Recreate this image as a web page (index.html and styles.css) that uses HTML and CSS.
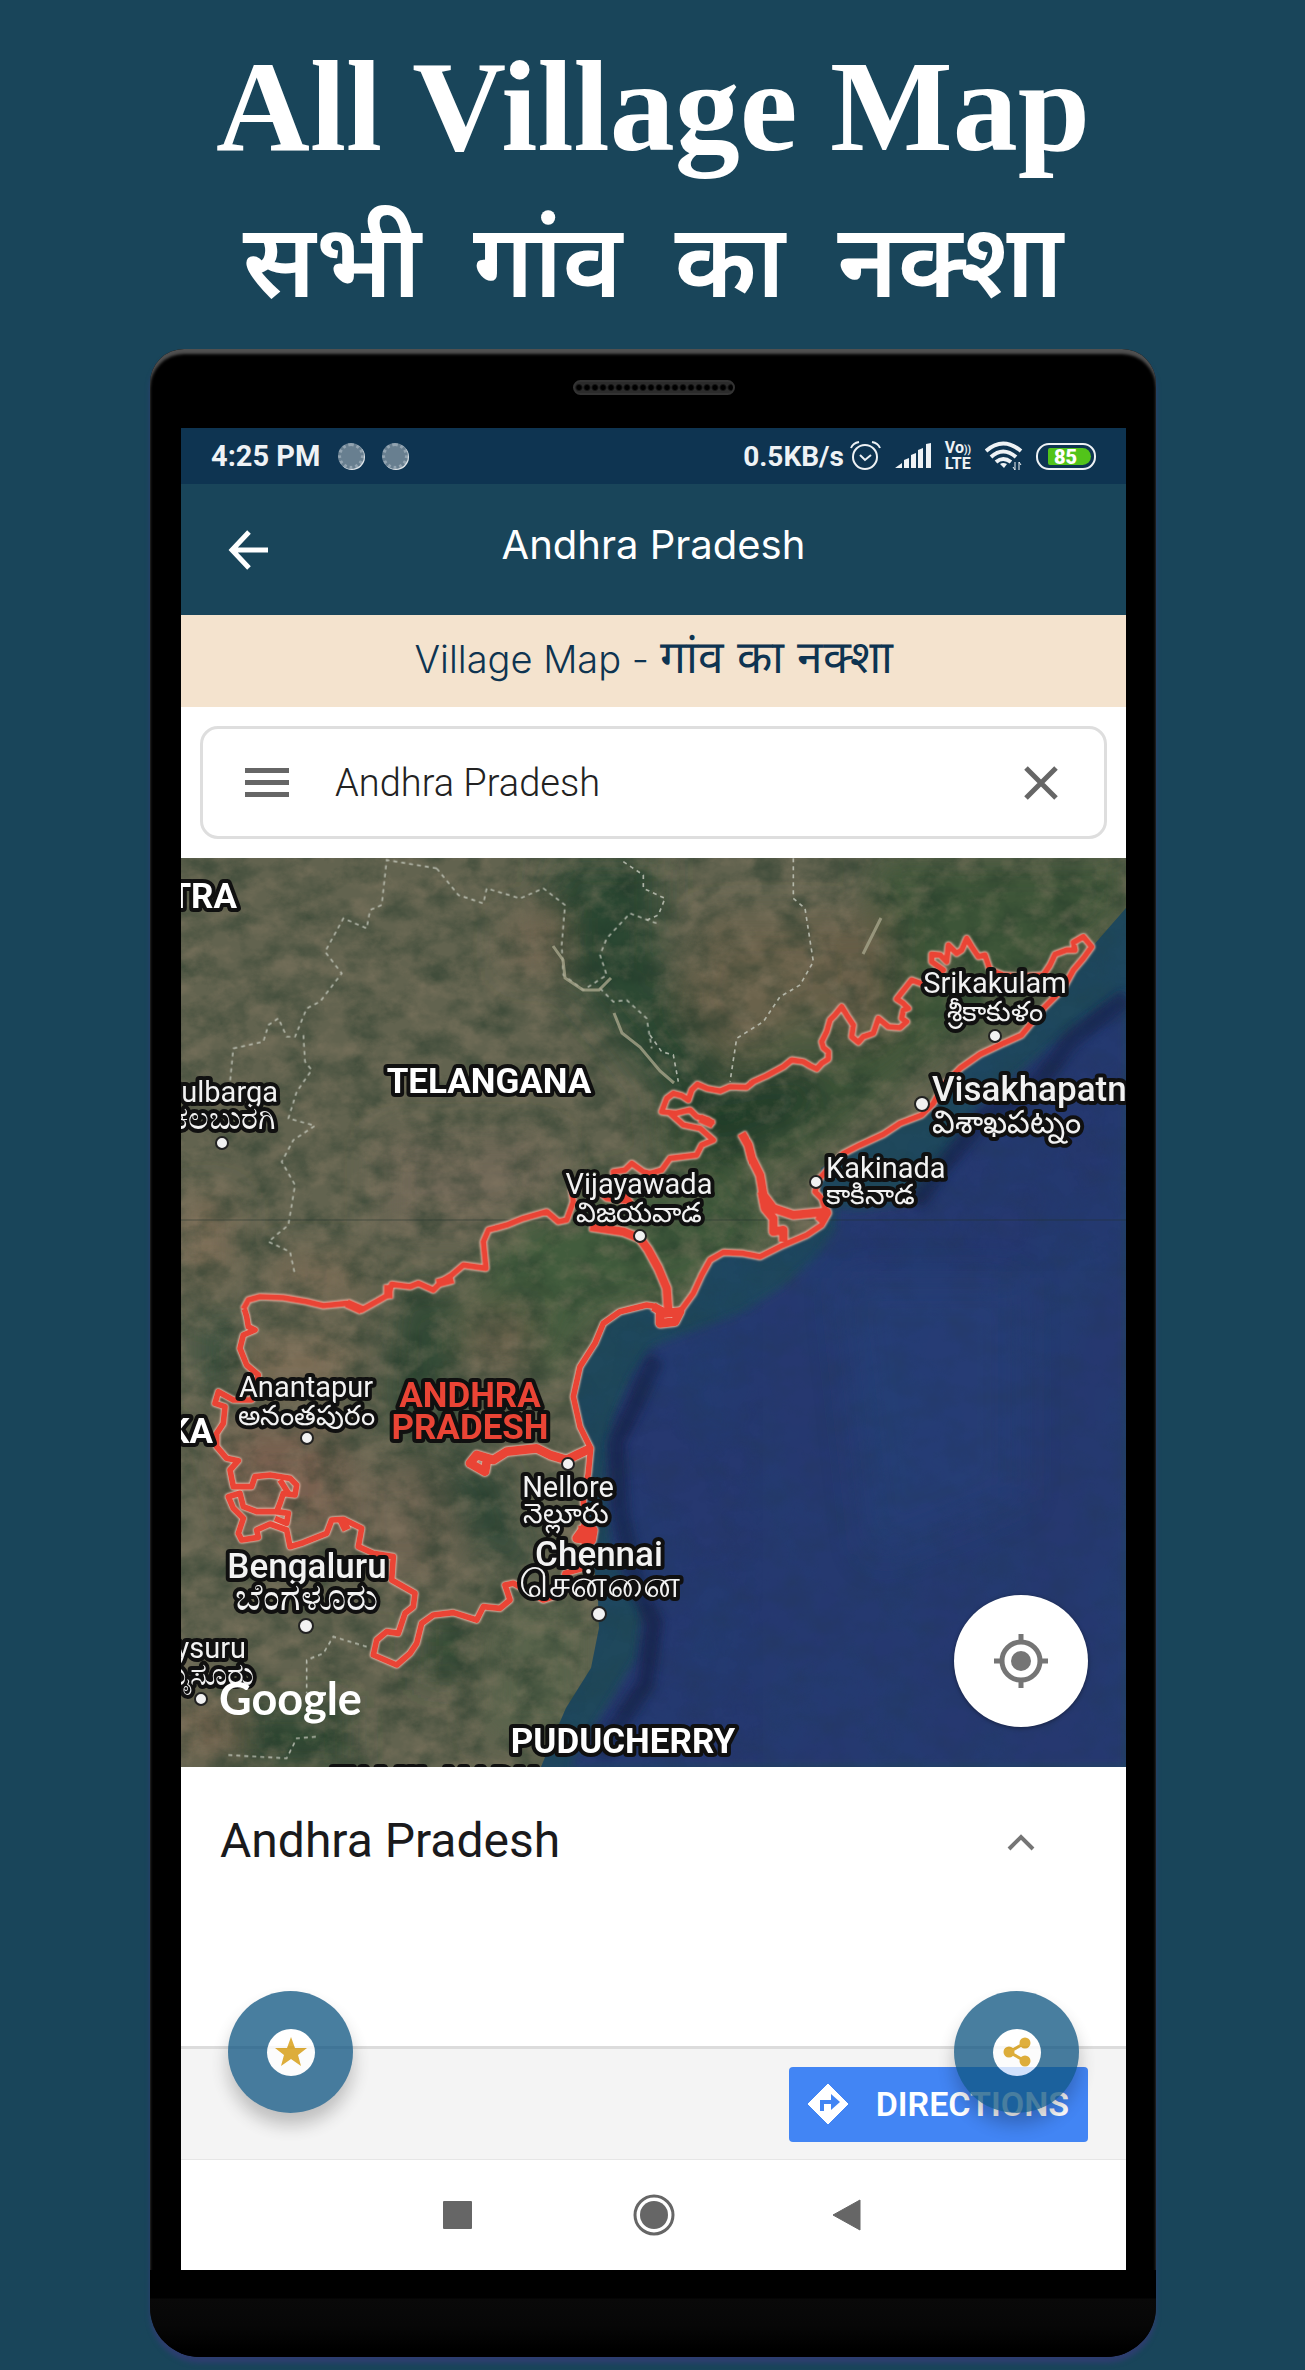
FILE: index.html
```html
<!DOCTYPE html>
<html lang="en">
  <head>
    <title>All Village Map</title>
    <meta charset="UTF-8"/>
    <meta name="viewport" content="width=device-width, initial-scale=1">
    <link rel="stylesheet" href="styles.css">
  </head>
  <body>
    <header class="promo">
      <h1>All Village Map</h1>
      <p class="promo-hindi" lang="hi"><span>सभी</span><span>गांव</span><span>का</span><span>नक्शा</span></p>
    </header>

    <div class="phone">
      <div class="speaker"></div>
      <div class="screen">

        <div class="status-bar">
          <span>4:25 PM</span>
          <span class="moon"></span>
          <span class="moon"></span>
          <span class="speed">0.5KB/s</span>
          <svg class="alarm" width="31" height="30" viewBox="0 0 31 30" fill="none" stroke="#eef2f5" stroke-width="2">
            <circle cx="15" cy="16" r="12"/><path d="M10 14l5 5 6-5M1 7q2-5 8-6M30 7q-2-5-8-6"/>
          </svg>
          <svg class="signal" width="36" height="26" viewBox="0 0 36 26" fill="#eef2f5">
            <path d="M0 25l7-5v5zM9 17l5-2v10H9zM16 12l5-2v15h-5zM23 7l5-2v20h-5zM31 1l5-1v25h-5z"/>
          </svg>
          <span class="volte"><span>Vo<small>))</small></span><span>LTE</span></span>
          <svg class="wifi" width="38" height="30" viewBox="0 0 38 30" fill="none" stroke="#eef2f5" stroke-width="4">
            <path d="M1 10q17-15 35 0M6 16q12-11 25 0M11 21q7-6 15 0"/><path d="M15 23q3-2 7 0l-3 4z" fill="#eef2f5" stroke="none"/>
            <path d="M30 21v8M34 21v8M28 26l2 3M34 21l2 3" stroke-width="1"/>
          </svg>
          <span class="battery"><b>85</b></span>
        </div>

        <div class="app-bar">
          <button class="icon-btn back" aria-label="Back">
            <svg width="40" height="40" viewBox="0 0 40 40" fill="none" stroke="#fff" stroke-width="5"><path d="M21 2L4 20l17 18M4 20h36"/></svg>
          </button>
          <h2>Andhra Pradesh</h2>
        </div>

        <div class="banner">Village Map - <span lang="hi">गांव का नक्शा</span></div>

        <form class="search">
          <button type="button" class="icon-btn menu" aria-label="Menu">
            <svg width="44" height="30" viewBox="0 0 44 30" fill="#666"><path d="M0 0h44v5H0zM0 12h44v5H0zM0 24h44v5H0z"/></svg>
          </button>
          <input type="text" aria-label="Search place" value="Andhra Pradesh">
          <button type="reset" class="icon-btn" aria-label="Clear">
            <svg width="34" height="34" viewBox="0 0 34 34" fill="none" stroke="#666" stroke-width="5"><path d="M2 2l30 30M32 2L2 32"/></svg>
          </button>
        </form>

        <div class="map">
          <svg class="map-art" viewBox="0 0 945 909" preserveAspectRatio="xMidYMid slice">
            <defs>
              <filter id="soft" x="-30%" y="-30%" width="160%" height="160%"><feGaussianBlur stdDeviation="18"/></filter>
              <filter id="edge"><feGaussianBlur stdDeviation="4"/></filter>
              <!-- terrain: dark and light mottling -->
              <filter id="grain" x="0" y="0" width="100%" height="100%" color-interpolation-filters="sRGB">
                <feTurbulence type="fractalNoise" baseFrequency=".03 .04" numOctaves="5" seed="8"/>
                <feColorMatrix values="0 0 0 0 .13  0 0 0 0 .22  0 0 0 0 .16  2.2 0 0 0 -.85"/>
              </filter>
              <filter id="dust" x="0" y="0" width="100%" height="100%" color-interpolation-filters="sRGB">
                <feTurbulence type="fractalNoise" baseFrequency=".04 .05" numOctaves="5" seed="31"/>
                <feColorMatrix values="0 0 0 0 .56  0 0 0 0 .5  0 0 0 0 .41  0 2.2 0 0 -.95"/>
              </filter>
              <filter id="waves" x="0" y="0" width="100%" height="100%" color-interpolation-filters="sRGB">
                <feTurbulence type="fractalNoise" baseFrequency=".012 .009" numOctaves="5" seed="4"/>
                <feColorMatrix values="0 0 0 0 .12  0 0 0 0 .27  0 0 0 0 .46  2 0 0 0 -.7"/>
              </filter>
              <clipPath id="sea">
                <path d="M945 50L911 89 882 130 862 150 841 177 799 196 779 210 740 257 702 276 662 295 640 310 637 325 645 357 625 377 602 387 579 398 542 395 525 405 512 435 495 455 486 465 478 450 465 447 439 454 422 465 414 485 399 509 392 539 399 569 410 590 407 615 403 660 412 700 417 740 418 770 410 810 385 850 372 880 360 909H945z"/>
              </clipPath>
            </defs>

            <rect width="945" height="909" fill="#62634f"/>
            <g filter="url(#soft)">
              <path d="M365 0H480V110L560 180V250L480 240 380 110z" fill="#2a4733"/>
              <path d="M330 60h50v50h-50z" fill="#7a6a55"/>
              <path d="M520 60h130v100l-90 50-60-60z" fill="#6b624c"/>
              <path d="M690 0h255v50L850 140 760 190 640 290 520 350 470 260 600 200 700 150z" fill="#3c5538"/>
              <path d="M520 220l150-90 50 30-80 60-80 30z" fill="#4b5a40"/>
              <path d="M640 60h70v120h-60z" fill="#665d47"/>
              <path d="M480 245l90-30 80-5-20 50-100 45z" fill="#203d2a"/>
              <path d="M200 280h170v90H200z" fill="#6f6756"/>
              <path d="M0 340h50v80H0zM90 400h90v40H90zM60 480h110v50H60z" fill="#7b6c54"/>
              <path d="M330 360l130-40 150 30-40 50-60 40-100 20-30 60-120-30z" fill="#435b3e"/>
              <path d="M215 430l50-10 20 130-50 60-30-60z" fill="#314a36"/>
              <path d="M290 450h60v60h-60z" fill="#6c624d"/>
              <path d="M40 570h120v100H60z" fill="#79614f"/>
              <path d="M170 610h100v110H170z" fill="#6d6351"/>
              <path d="M255 600l50-10 50 110-25 20-70-70z" fill="#304839"/>
              <path d="M240 760h50v60h-50zM60 850h110v59H60z" fill="#2f4733"/>
              <path d="M310 740h100v140H300z" fill="#58634b"/>
              <path d="M15 460h50v70H15z" fill="#384f3d"/>
              <path d="M0 850h50v40H0z" fill="#79634e"/>
            </g>
            <rect width="945" height="909" filter="url(#grain)" opacity=".5"/>
            <rect width="945" height="909" filter="url(#dust)" opacity=".4"/>

            <g clip-path="url(#sea)">
              <rect width="945" height="909" fill="#1f485c"/>
              <path d="M945 133L890 172 850 205 800 245 765 300 730 345 680 352 655 350 655 370 635 400 600 430 560 455 500 478 470 490 450 520 433 560 424 620 432 700 462 750 456 800 425 850 388 909H945z" fill="#28396f" filter="url(#edge)"/>
              <path d="M660 420h180v220l-150 60z" fill="#253f79" opacity=".6" filter="url(#soft)"/>
              <path d="M945 140L890 182 858 225 800 262 760 310 735 345M475 500l-20 45-20 40 5 70 15 70 18 40-8 60-45 70" fill="none" stroke="#18244a" stroke-width="18" opacity=".7" filter="url(#edge)"/>
              <rect width="945" height="909" filter="url(#waves)" opacity=".3"/>
              <rect width="945" height="909" filter="url(#grain)" opacity=".1"/>
            </g>
            <path d="M0 362h945" stroke="#20302c" stroke-width="1" opacity=".5"/>

            <!-- neighbouring state borders and the river -->
            <g transform="scale(.33333)" fill="none" stroke="#c3c7bb" stroke-width="5" stroke-dasharray="12 12" opacity=".85">
              <path transform="translate(-3 -9)" d="M770 40L620 15 605 150 570 165 560 220 490 190 435 290 485 355 420 440 380 460 345 545 320 545 295 490 265 510 250 560 160 580 150 680M370 540L375 620 395 645 350 710 325 790 405 812 340 855 305 920 345 990 325 1110 265 1160 330 1190 345 1260M770 40L835 120 910 145 920 100 1020 130 1090 100 1155 150 1145 270 1150 360 1210 405 1280 360 1260 300 1280 250 1350 175 1430 205M1260 400L1300 440 1340 435 1400 490 1415 580"/>
              <path transform="translate(1407 -9)" d="M430 10V130L465 160 490 320 450 390 390 425 340 500 260 550 240 680M-80 20L-20 60-20 100 45 130 25 180-20 200M0 540L35 590 70 600 85 680"/>
              <path transform="translate(-3 1326)" d="M560 1040L460 1010 430 1060 380 1080 380 1180M145 1365L320 1375 350 1315 410 1310"/>
            </g>
            <path d="M372 88l10 14 2 18 18 12 16 0 12-12M433 155l8 20 18 14 20 24 14 12M700 60l-18 36" fill="none" stroke="#a5a48a" stroke-width="3" opacity=".8"/>

            <!-- Andhra Pradesh outline -->
            <g class="state-line">
              <g transform="scale(.33333)">
                <g transform="translate(1407 -9)">
                  <path d="M190 810L175 795 140 785 120 765 75 775 35 770 50 730 70 715 95 722 115 735 125 705 142 688 170 700 210 708 240 695 290 697 310 680 350 662 400 635 425 615 460 620 480 632 500 642 515 625 535 612 535 590 520 578 515 560 530 530 540 495 555 480 575 455 590 480 610 510 605 545 625 562 640 545 670 535 685 490 715 515 750 518 770 500 755 490 760 465 775 460 760 445 740 432 765 400 785 375 820 388 880 345 845 320 845 298 870 300 890 320 895 270 920 295 935 285 950 250 965 275 985 305 1005 300 1020 345 1060 360 1110 365 1180 360 1200 330 1215 298 1250 285 1275 285 1270 262 1300 245 1325 275 1300 310 1270 345 1240 400 1180 460 1115 540 1060 565 990 598 930 640 880 690 850 745 815 780 750 805 700 838 630 870 580 895 540 935 505 975 495 1010 515 1030 525 1060 535 1075 515 1110 470 1140 400 1170 330 1205 280 1195 220 1192 180 1215 155 1260 130 1315 90 1370"/>
                  <path d="M60 775L100 810 150 820 190 855 155 870 140 900 60 910 35 945 0 955-20 950-55 925-75 945-110 950-105 985-60 1040-130 1030-185 980-235 1005-230 1040-250 1095-275 1100-310 1070-380 1090-430 1110-485 1125-500 1160-492 1240-560 1230-595 1260-620 1275-650 1305-695 1285-720 1295-775 1288-785 1320-865 1365-910 1345-980 1352-1030 1340-1100 1328-1170 1325-1205 1335-1220 1362"/>
                  <path class="thick" d="M275 835L295 870 305 910 330 960 340 1020 370 1060 430 1080 530 1070 505 1100M335 1010L345 1060 370 1090 370 1130 400 1125 400 1160M-180 1115L-80 1130-30 1150-5 1185 25 1240 50 1300 55 1370M150 790L190 808M-785 1290L-785 1330M-910 1345L-865 1365M-640 1285L-590 1272"/>
                </g>
                <g transform="translate(-3 1326)">
                  <path d="M193 27L200 50 205 80 225 90 190 105 180 145 200 195 235 225 225 260 215 300 160 300 115 275 105 310 135 320 130 370 110 400 110 440 140 475 175 482 150 510 160 560 215 560 225 530 270 525 330 535 350 555 345 585 310 580 300 610 290 635 230 635 190 620 180 580 145 590 160 625 190 655 175 700 185 720 235 712 230 690 270 672 320 690 330 740 370 728 440 700 455 660 490 658 545 685 535 740 580 760 640 770 635 840 705 880 700 920 675 940 655 1000 620 995 590 1020 580 1065 650 1095 690 1060 710 1030 725 970 760 945 820 938 890 960 910 920 960 925 990 900 975 855 1000 850 1090 900 1150 880 1155 820 1210 805 1215 700 1210 600 1225 520 1232 445 1200 380 1180 290 1200 200 1245 130 1270 70 1320 35 1400 15 1430 20"/>
                  <path d="M300 540L325 580M290 635L325 640 320 670 285 655"/>
                  <path class="thick" d="M1232 445L1190 465 1160 480 1110 465 1070 445 980 455 940 480 890 465 870 490 915 515 920 485M1195 690L1240 690 1235 720 1190 715 1215 680 1220 740M485 658L500 690M1420 20L1455 40 1500 35 1485 65 1440 70 1440 40"/>
                </g>
              </g>
            </g>

            <g class="state-label">
              <text x="56" y="50" text-anchor="end">TRA</text>
              <text x="308" y="235" text-anchor="middle">TELANGANA</text>
              <text x="32" y="585" text-anchor="end">KA</text>
              <text x="442" y="895" text-anchor="middle">PUDUCHERRY</text>
              <text x="254" y="935" text-anchor="middle">TAMIL NADU</text>
              <text class="current" x="289" y="549" text-anchor="middle">ANDHRA</text>
              <text class="current" x="289" y="581" text-anchor="middle">PRADESH</text>
            </g>

            <g class="town-label">
              <text x="97" y="244" text-anchor="end">Gulbarga</text>
              <text class="local kannada" x="95" y="271" text-anchor="end">ಕಲಬುರಗಿ</text>
              <text x="458" y="336" text-anchor="middle">Vijayawada</text>
              <text class="local" x="458" y="364" text-anchor="middle">విజయవాడ</text>
              <text x="814" y="135" text-anchor="middle">Srikakulam</text>
              <text class="local" x="814" y="163" text-anchor="middle">శ్రీకాకుళం</text>
              <text x="645" y="320">Kakinada</text>
              <text class="local" x="645" y="346">కాకినాడ</text>
              <text x="125" y="539" text-anchor="middle">Anantapur</text>
              <text class="local" x="125" y="567" text-anchor="middle">అనంతపురం</text>
              <text x="387" y="639" text-anchor="middle">Nellore</text>
              <text class="local" x="385" y="665" text-anchor="middle">నెల్లూరు</text>
              <text x="65" y="800" text-anchor="end">ysuru</text>
              <text class="local kannada" x="73" y="827" text-anchor="end">ಮೈಸೂರು</text>
            </g>

            <g class="city-label">
              <text x="751" y="243">Visakhapatnam</text>
              <text class="local" x="751" y="275">విశాఖపట్నం</text>
              <text x="418" y="708" text-anchor="middle">Chennai</text>
              <text class="local tamil" x="418" y="739" text-anchor="middle">சென்னை</text>
              <text x="126" y="720" text-anchor="middle">Bengaluru</text>
              <text class="local kannada" x="125" y="752" text-anchor="middle">ಬೆಂಗಳೂರು</text>
            </g>

            <g class="dots">
              <circle cx="41" cy="285" r="6"/><circle cx="459" cy="378" r="6"/><circle cx="814" cy="178" r="6"/>
              <circle cx="635" cy="324" r="6"/><circle cx="126" cy="580" r="6"/><circle cx="387" cy="606" r="6"/>
              <circle cx="20" cy="841" r="6"/><circle cx="741" cy="246" r="7"/><circle cx="418" cy="756" r="7"/>
              <circle cx="125" cy="768" r="7"/>
            </g>
            <text class="google" x="38" y="857">Google</text>
          </svg>
          <button class="locate" aria-label="My location">
            <svg width="54" height="54" viewBox="0 0 54 54" fill="none" stroke="#757575" stroke-width="5">
              <circle cx="27" cy="27" r="19"/><path d="M27 0v8M27 46v8M0 27h8M46 27h8"/><circle cx="27" cy="27" r="10" fill="#757575" stroke="none"/>
            </svg>
          </button>
        </div>

        <div class="place">
          <h3>Andhra Pradesh</h3>
          <button class="icon-btn" aria-label="Show details">
            <svg width="28" height="18" viewBox="0 0 28 18" fill="none" stroke="#757575" stroke-width="4"><path d="M2 16L14 4l12 12"/></svg>
          </button>
        </div>

        <div class="actions">
          <button class="directions">
            <svg width="42" height="42" viewBox="0 0 42 42"><path d="M21 1l20 20-20 20L1 21z" fill="#fff" stroke="#fff" stroke-linejoin="round"/><path d="M15 28v-9h13" fill="none" stroke="#4285f4" stroke-width="4"/><path d="M24 11l9 8-9 8z" fill="#4285f4"/></svg>
            DIRECTIONS
          </button>
          <button class="fab fab-star" aria-label="Rate">
            <span><svg width="32" height="30" viewBox="0 0 32 30" fill="#d69700"><path d="M16 0l4 11h12l-9 7 3 11-10-7-10 7 3-11-9-7h12z"/></svg></span>
          </button>
          <button class="fab fab-share" aria-label="Share">
            <span><svg width="28" height="30" viewBox="0 0 28 30" fill="#d69700" stroke="#d69700" stroke-width="3"><path d="M22 6L6 15l16 9" fill="none"/><circle cx="22" cy="6" r="4"/><circle cx="6" cy="15" r="4"/><circle cx="22" cy="24" r="4"/></svg></span>
          </button>
        </div>

        <nav class="nav-bar">
          <button class="icon-btn" aria-label="Recent apps">
            <svg width="42" height="42" viewBox="0 0 42 42" fill="#666"><rect x="6" y="7" width="29" height="28" rx="1"/></svg>
          </button>
          <button class="icon-btn" aria-label="Home">
            <svg width="42" height="42" viewBox="0 0 42 42" fill="#666"><circle cx="21" cy="21" r="14"/><circle cx="21" cy="21" r="19" fill="none" stroke="#666" stroke-width="3"/></svg>
          </button>
          <button class="icon-btn" aria-label="Go back">
            <svg width="42" height="42" viewBox="0 0 42 42" fill="#666" stroke="#666" stroke-linejoin="round"><path d="M4 21L31 6v30z"/></svg>
          </button>
        </nav>
      </div>
      <div class="chin"></div>
    </div>
  </body>
</html>
```
FILE: styles.css
```css
* {
  box-sizing: border-box;
}
body {
  margin: 0;
  padding: 0 149px 13px 150px;
  background-color: #19455a;
  font-family: Roboto, sans-serif;
}
h1, h2, h3, p {
  margin: 0;
  font-weight: 400;
}
button {
  border: 0;
  padding: 0;
  font-family: inherit;
  cursor: pointer;
}
svg {
  display: block;
  flex: none;
}
.icon-btn {
  background: none;
}

/* heading */
.promo {
  height: 349px;
  padding-top: 34px;
  color: #fff;
  text-align: center;
}
h1 {
  font-family: "Liberation Serif", serif;
  font-size: 130px;
  font-weight: 700;
  line-height: 144px;
}
.promo-hindi {
  display: flex;
  justify-content: center;
  gap: 52px;
  font-family: "Noto Sans", sans-serif;
  font-size: 102px;
  font-weight: 600;
  line-height: 160px;
}

/* phone body */
.phone {
  padding: 31px 30px 0 31px;
  border-radius: 34px 34px 50px 50px;
  background-color: #000;
  box-shadow: inset 0 5px 3px #505050, 0 6px 5px #2e3e70;
}
.speaker {
  width: 162px;
  height: 15px;
  margin: 0 auto 33px;
  border: 2px solid #333;
  border-radius: 8px;
  background: radial-gradient(circle, #000 2px, #2b2b2b 4px) 0 0 / 8px 11px;
}
.screen {
  background-color: #fff;
}
.chin {
  height: 87px;
  margin: 0 -30px 0 -31px;
  border-radius: 0 0 50px 50px;
  background: linear-gradient(#000 28px, #090909 29px, #070707 55px, #000 80px);
}

/* status bar */
.status-bar {
  display: flex;
  align-items: center;
  height: 56px;
  padding: 0 30px;
  background-color: #0e3451;
  color: #eef2f5;
  font-size: 29px;
  font-weight: 700;
}
.moon {
  width: 26px;
  height: 26px;
  margin-left: 18px;
  border: 3px dotted #93a4b1;
  border-radius: 50%;
  background-color: #687f90;
  box-shadow: 1px 1px 0 #dfe5e9;
}
.speed {
  margin-left: auto;
  font-size: 28px;
}
.alarm {
  margin-left: 6px;
}
.signal {
  margin-left: 14px;
}
.volte {
  display: flex;
  flex-direction: column;
  margin-left: 14px;
  font-size: 16px;
  line-height: 14px;
}
.volte small {
  font-size: 10px;
}
.wifi {
  margin-left: 14px;
}
.battery {
  display: flex;
  width: 60px;
  height: 27px;
  margin-left: 13px;
  padding: 3px;
  border: 2px solid #eef2f5;
  border-radius: 13px;
}
.battery b {
  flex: 1;
  margin-left: 7px;
  border-radius: 2px 9px 9px 2px;
  background-color: #52c41a;
  color: #fff;
  font-size: 20px;
  line-height: 18px;
  padding-left: 6px;
}

/* title bars */
.app-bar {
  display: flex;
  align-items: center;
  justify-content: center;
  position: relative;
  height: 131px;
  background-color: #19455a;
  color: #fff;
}
.back {
  position: absolute;
  left: 47px;
}
h2 {
  font-family: Inter, sans-serif;
  font-size: 40px;
  line-height: 48px;
  padding-bottom: 10px;
}
.banner {
  height: 92px;
  background-color: #f4e3ce;
  color: #0e3451;
  font-family: Inter, sans-serif;
  font-size: 38px;
  font-weight: 300;
  line-height: 82px;
  text-align: center;
}
.banner span {
  font-size: 46px;
}

/* search */
.search {
  display: flex;
  align-items: center;
  height: 113px;
  margin: 19px;
  padding: 0 46px 0 42px;
  border: 3px solid #dedede;
  border-radius: 18px;
}
.search input {
  flex: 1;
  min-width: 0;
  margin-left: 46px;
  padding: 0;
  border: 0;
  background: none;
  color: #222;
  font-family: Roboto, sans-serif;
  font-size: 38px;
  font-weight: 300;
}

/* map */
.map {
  position: relative;
}
.map-art {
  width: 100%;
  height: auto;
}
.state-line {
  filter: drop-shadow(0 0 1px #f0c8b8) drop-shadow(0 0 1px #d8a898);
}
.state-line path {
  fill: none;
  stroke: #ea4435;
  stroke-width: 17px;
  stroke-linejoin: round;
}
.state-line .thick {
  stroke-width: 26px;
}
.map-art text {
  fill: #f2f2f2;
  stroke: #101010;
  stroke-width: 8px;
  stroke-linejoin: round;
  paint-order: stroke;
}
.state-label text {
  font-size: 35px;
  font-weight: 700;
  fill: #fff;
}
.map-art .current {
  fill: #ea4435;
}
.town-label text {
  font-size: 29px;
}
.town-label .local {
  font-size: 28px;
}
.town-label .kannada {
  font-size: 32px;
}
.city-label text {
  font-size: 35px;
  font-weight: 500;
}
.city-label .local {
  font-size: 32px;
  font-weight: 400;
}
.city-label .kannada, .city-label .tamil {
  font-size: 38px;
}
.dots circle {
  fill: #f2f2f2;
  stroke: #222;
  stroke-width: 2px;
}
.map-art .google {
  fill: #fff;
  stroke: none;
  font-family: Lato, sans-serif;
  font-size: 45px;
  font-weight: 700;
}
.locate {
  display: flex;
  align-items: center;
  justify-content: center;
  position: absolute;
  right: 38px;
  bottom: 40px;
  width: 134px;
  height: 132px;
  border-radius: 50%;
  background-color: #fff;
  box-shadow: 0 1px 4px rgba(0, 0, 0, .4);
}

/* place sheet */
.place {
  display: flex;
  align-items: flex-start;
  justify-content: space-between;
  height: 279px;
  padding: 44px 91px 0 39px;
}
h3 {
  color: #1a1a1c;
  font-size: 48px;
  line-height: 60px;
}
.place .icon-btn {
  margin-top: 22px;
}
.actions {
  display: flex;
  align-items: center;
  justify-content: flex-end;
  position: relative;
  height: 114px;
  padding-right: 38px;
  border-top: 3px solid #dcdcdc;
  border-bottom: 1px solid #e6e6e6;
  background-color: #f4f4f4;
}
.directions {
  display: flex;
  align-items: center;
  gap: 27px;
  height: 75px;
  padding: 0 19px 0 18px;
  border-radius: 4px;
  background-color: #4285f4;
  color: #fff;
  font-size: 34px;
  font-weight: 600;
}
.fab {
  position: absolute;
  top: -58px;
  width: 125px;
  height: 122px;
  border-radius: 50%;
  background-color: #105682;
  box-shadow: 0 12px 18px rgba(0, 0, 0, .3);
  opacity: .76;
}
.fab span {
  display: flex;
  align-items: center;
  justify-content: center;
  width: 48px;
  height: 47px;
  margin: auto;
  border-radius: 50%;
  background-color: #fff;
}
.fab-star {
  left: 47px;
}
.fab-share {
  right: 47px;
}

/* android buttons */
.nav-bar {
  display: flex;
  justify-content: center;
  gap: 154px;
  height: 110px;
}
```
